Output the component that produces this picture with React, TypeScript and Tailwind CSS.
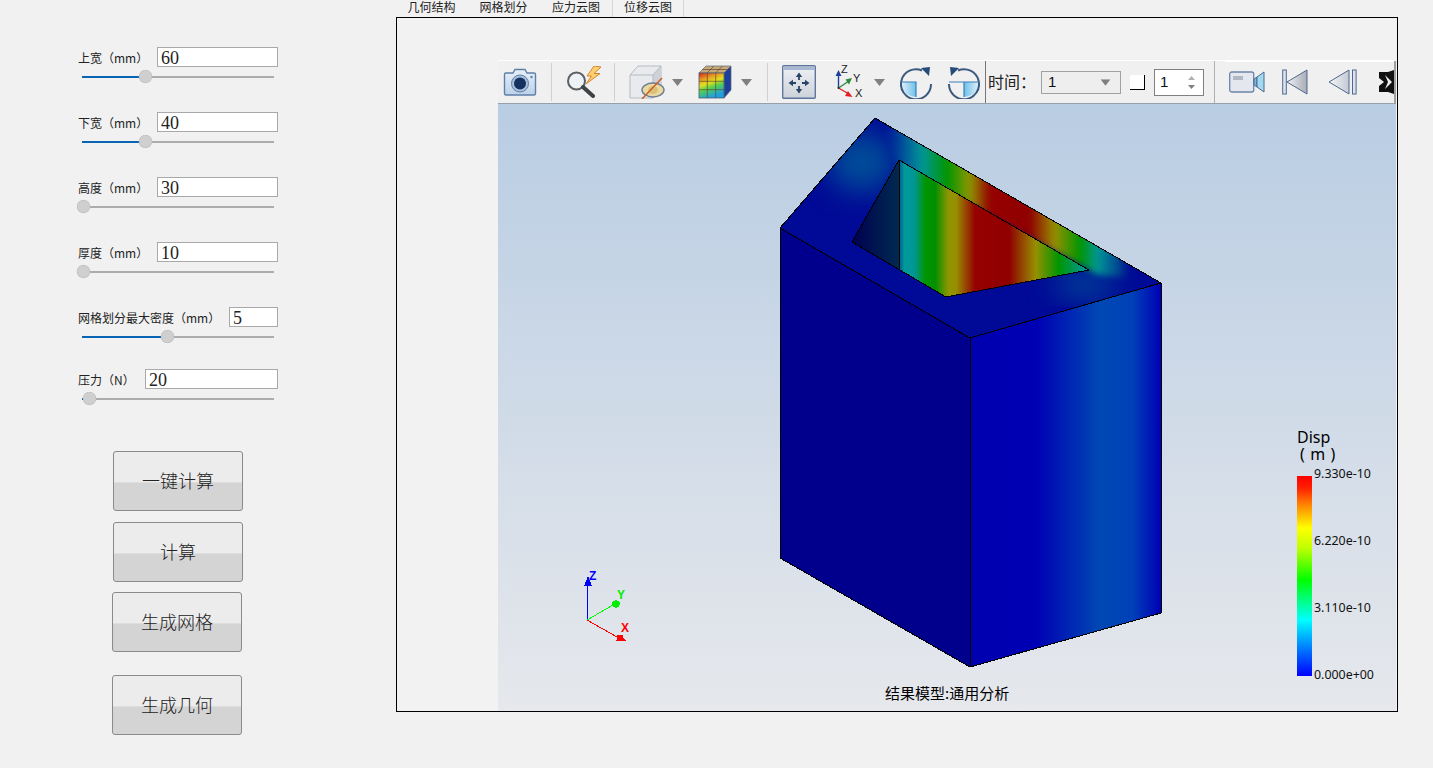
import { useState } from 'react';

const params = [
  { label: '上宽（mm）', value: '60', inputClass: 'w-[121px]', fill: 'w-[63px]', last: 'mb-[26px]' },
  { label: '下宽（mm）', value: '40', inputClass: 'w-[121px]', fill: 'w-[63px]', last: 'mb-[26px]' },
  { label: '高度（mm）', value: '30', inputClass: 'w-[121px]', fill: 'w-[1px]', last: 'mb-[26px]' },
  { label: '厚度（mm）', value: '10', inputClass: 'w-[121px]', fill: 'w-[1px]', last: 'mb-[26px]' },
  { label: '网格划分最大密度（mm）', value: '5', inputClass: 'w-[49px]', fill: 'w-[85px]', last: 'mb-[23px]' },
  { label: '压力（N）', value: '20', inputClass: 'w-[133px]', fill: 'w-[7px]', last: 'mb-[43px]' },
];

const buttons = [
  { text: '一键计算', cls: 'ml-[35px] mb-[11px]' },
  { text: '计算', cls: 'ml-[35px] mb-[10px]' },
  { text: '生成网格', cls: 'ml-[34px] mb-[23px]' },
  { text: '生成几何', cls: 'ml-[34px]' },
];

const tabs = [
  { text: '几何结构', cls: 'w-[71px]' },
  { text: '网格划分', cls: 'w-[73px]' },
  { text: '应力云图', cls: 'w-[72px]' },
  { text: '位移云图', cls: 'w-[72px] border-x border-[#d8d8d8] bg-[#f2f2f2]' },
];

function ParamRow({ p }: { p: (typeof params)[number] }) {
  const [value, setValue] = useState(p.value);
  return (
    <div className={p.last}>
      <div className="flex h-[20px] items-center justify-between">
        <span className="pt-[1px] text-[12px] leading-none text-[#222]">{p.label}</span>
        <input
          value={value}
          onChange={(e) => setValue(e.target.value)}
          className={`${p.inputClass} h-[20px] border border-[#a9a9a9] bg-white pt-[2px] pl-[3px] font-['Liberation_Serif',serif] text-[18px] leading-none text-[#222] outline-none`}
        />
      </div>
      <div className="ml-[4px] flex h-[19px] w-[192px] items-center">
        <div className={`${p.fill} h-[2px] bg-[#0a64b4]`} />
        <div className="z-10 -mx-[5.5px] h-[11px] w-[11px] shrink-0 scale-[1.25] rounded-full border border-dotted border-[#bbb] bg-[#cfcfcf]" />
        <div className="h-[2px] flex-1 bg-[#acacac]" />
      </div>
    </div>
  );
}

function Caret({ className }: { className: string }) {
  return (
    <svg width="11" height="7" viewBox="0 0 11 7" className={className}>
      <path d="M0 0H11L5.5 7Z" fill="#808080" />
    </svg>
  );
}

function Sep({ className }: { className: string }) {
  return <div className={`${className} h-[38px] w-[1px] shrink-0 bg-[#d0d0d0]`} />;
}

function CameraIcon() {
  return (
    <svg width="34" height="30" viewBox="0 0 34 30" className="ml-[5px] shrink-0">
      <defs>
        <linearGradient id="camBody" x1="0" y1="0" x2="0" y2="1">
          <stop offset="0" stopColor="#e8f0f8" />
          <stop offset="1" stopColor="#bcd2e8" />
        </linearGradient>
      </defs>
      <path d="M1.5 7.5Q1.5 6 3 6H10L12 2.5H22L24 6H31Q32.5 6 32.5 7.5V26Q32.5 28 31 28H3Q1.5 28 1.5 26Z" fill="url(#camBody)" stroke="#5f7ea8" strokeWidth="1.4" />
      <circle cx="17" cy="16.5" r="8.5" fill="#a9c0dc" stroke="#5f7ea8" />
      <circle cx="17" cy="16.5" r="6" fill="#16305f" />
      <circle cx="28.5" cy="10" r="1.2" fill="#5f7ea8" />
    </svg>
  );
}

function MagnifierIcon() {
  return (
    <svg width="36" height="32" viewBox="0 0 36 32" className="ml-[14px] shrink-0">
      <circle cx="10.5" cy="15" r="8.5" fill="#edf2f6" stroke="#5a5f62" strokeWidth="2" />
      <path d="M17 21L27 30" stroke="#3f4346" strokeWidth="4" strokeLinecap="round" />
      <path d="M28 0L21 10H25.5L20 18L34 7.5H28L35 1Z" fill="#fbd070" stroke="#d9822b" strokeWidth="1" />
    </svg>
  );
}

function CubeIcon() {
  return (
    <svg width="36" height="34" viewBox="0 0 36 34" className="ml-[14px] shrink-0">
      <path d="M1 10L9 1H32V24L24 33H1Z" fill="#e8eaee" stroke="#b4bac4" />
      <path d="M24 10L32 1V24L24 33Z" fill="#ced2d8" />
      <path d="M1 10H24V33M24 10L32 1" fill="none" stroke="#b4bac4" />
      <ellipse cx="24" cy="25" rx="11" ry="7" fill="#ead9a0" stroke="#6f7e94" strokeWidth="1.4" />
      <ellipse cx="24" cy="25" rx="5" ry="4" fill="#dcc078" />
      <path d="M13 34L33 13" stroke="#c9602b" strokeWidth="1.5" />
    </svg>
  );
}

function RubikIcon() {
  return (
    <svg width="34" height="34" viewBox="0 0 34 34" className="ml-[15px] shrink-0">
      <defs>
        <linearGradient id="rubikFace" x1="0" y1="0" x2="0.35" y2="1">
          <stop offset="0" stopColor="#d82020" />
          <stop offset="0.28" stopColor="#e8a020" />
          <stop offset="0.48" stopColor="#e0e020" />
          <stop offset="0.68" stopColor="#50d050" />
          <stop offset="1" stopColor="#20a0e0" />
        </linearGradient>
      </defs>
      <path d="M1 8L8 1H33L26 8Z" fill="#c8a878" stroke="#5c6a7c" strokeWidth="0.7" />
      <path d="M26 8L33 1V25L26 33Z" fill="#1c3f9a" stroke="#5c6a7c" strokeWidth="0.7" />
      <rect x="1" y="8" width="25" height="25" fill="url(#rubikFace)" stroke="#4a5a70" strokeWidth="0.8" />
      <path d="M9.3 8V33M17.7 8V33M1 16.3H26M1 24.7H26M9 8L16 1M17.5 8L24.5 1M4.5 4.5H29.5" stroke="#5c4a30" strokeWidth="0.7" fill="none" />
    </svg>
  );
}

function PanIcon() {
  return (
    <svg width="34" height="34" viewBox="0 0 34 34" className="ml-[14px] shrink-0">
      <defs>
        <linearGradient id="panBody" x1="0" y1="0" x2="0" y2="1">
          <stop offset="0" stopColor="#eef1f5" />
          <stop offset="1" stopColor="#cdd2da" />
        </linearGradient>
      </defs>
      <rect x="0.7" y="0.7" width="32.6" height="32.6" rx="1" fill="url(#panBody)" stroke="#5f769c" strokeWidth="1.4" />
      <rect x="1.5" y="1.5" width="31" height="3.5" fill="#a8b8d0" />
      <path d="M17 7.5L13.8 12H20.2ZM17 28.5L13.8 24H20.2ZM6.5 18L11 14.8V21.2ZM27.5 18L23 14.8V21.2Z" fill="#2a4468" />
      <path d="M17 11V15M17 21V25M10 18H14M20 18H24" stroke="#2a4468" strokeWidth="1.8" />
    </svg>
  );
}

function AxisIcon() {
  return (
    <svg width="30" height="36" viewBox="0 0 30 36" className="ml-[18px] shrink-0">
      <path d="M4.5 24V10" stroke="#1c3f9a" strokeWidth="1.4" />
      <path d="M4.5 6L1.5 12H7.5Z" fill="#1c3f9a" />
      <path d="M4.5 24L15 17" stroke="#2a8a3a" strokeWidth="1.4" />
      <path d="M18 14L11.5 15.5L15 20.5Z" fill="#2a8a3a" />
      <path d="M4.5 24L15 30" stroke="#e02020" strokeWidth="1.4" />
      <path d="M18.5 33L11 32L14 27Z" fill="#e02020" />
      <circle cx="4.5" cy="24" r="1" fill="#222" />
      <g fontSize="11" fontFamily="Liberation Sans" fill="#222">
        <text x="7" y="9">Z</text>
        <text x="19" y="18">Y</text>
        <text x="21" y="33">X</text>
      </g>
    </svg>
  );
}

function RotateIcon({ flip, className }: { flip?: boolean; className: string }) {
  const id = flip ? 'rotA' : 'rotB';
  return (
    <svg width="32" height="34" viewBox="0 0 32 34" className={`${className} shrink-0 ${flip ? '-scale-x-100' : ''}`}>
      <defs>
        <linearGradient id={id} x1="0" y1="0" x2="1" y2="0">
          <stop offset="0" stopColor="#e4f2fc" />
          <stop offset="1" stopColor="#6cc0ea" />
        </linearGradient>
      </defs>
      <path d="M1 17A15 15 0 0 0 16 32V17Z" fill={`url(#${id})`} />
      <path d="M22 5.5A15 15 0 1 0 31 19" fill="none" stroke="#3b5a80" strokeWidth="2" />
      <path d={flip ? 'M1 17H31M16 17V32' : 'M1 17H16V32'} fill="none" stroke="#3b7fb8" strokeWidth="1.2" />
      <path d="M21 3L30 2L29 11Z" fill="#274a78" />
    </svg>
  );
}

function VideoIcon() {
  return (
    <svg width="36" height="22" viewBox="0 0 36 22" className="ml-[4px] shrink-0">
      <rect x="0.7" y="1" width="24" height="20" rx="2" fill="#e4e8ee" stroke="#6c84a8" strokeWidth="1.3" />
      <rect x="4" y="5" width="10" height="4" fill="#b0b8c4" />
      <path d="M25 8L28 6V16L25 14Z" fill="#7fb8e0" stroke="#4a6a90" />
      <path d="M28 6L35 1V21L28 16Z" fill="#a4d8f0" stroke="#4a6a90" />
    </svg>
  );
}

function FirstIcon() {
  return (
    <svg width="26" height="26" viewBox="0 0 26 26" className="ml-[17px] shrink-0">
      <defs>
        <linearGradient id="firstG" x1="0" y1="0" x2="1" y2="0">
          <stop offset="0" stopColor="#eef0f4" />
          <stop offset="1" stopColor="#a8acb4" />
        </linearGradient>
      </defs>
      <rect x="0.7" y="1" width="3.6" height="24" fill="#dde3ec" stroke="#4f6890" />
      <path d="M5 13L25 1V25Z" fill="url(#firstG)" stroke="#4f6890" />
    </svg>
  );
}

function PrevIcon() {
  return (
    <svg width="29" height="26" viewBox="0 0 29 26" className="ml-[20px] shrink-0">
      <defs>
        <linearGradient id="prevG" x1="0" y1="0" x2="1" y2="0">
          <stop offset="0" stopColor="#f4f6f8" />
          <stop offset="1" stopColor="#c4cad4" />
        </linearGradient>
      </defs>
      <path d="M1 13L21 1V25Z" fill="url(#prevG)" stroke="#4f6890" strokeWidth="1" />
      <rect x="24.5" y="1" width="3.6" height="24" fill="#dde3ec" stroke="#4f6890" />
    </svg>
  );
}

function ClippedIcon() {
  return (
    <svg width="15" height="24" viewBox="0 0 15 24" className="ml-[22px] shrink-0">
      <path d="M0 2H9L15 0V24L9 22H0V16L5 12L0 8Z" fill="#111" />
      <path d="M6 5L13 12L6 19L9 12Z" fill="#eee" />
    </svg>
  );
}

function Toolbar() {
  return (
    <div className="flex h-[44px] shrink-0 items-center border-t border-b border-t-white border-b-[#9aa0a8] bg-[#f0f0f0]">
      <CameraIcon />
      <Sep className="ml-[14px]" />
      <MagnifierIcon />
      <Sep className="ml-[12px]" />
      <CubeIcon />
      <Caret className="ml-[7px] shrink-0" />
      <RubikIcon />
      <Caret className="ml-[9px] shrink-0" />
      <Sep className="ml-[15px]" />
      <PanIcon />
      <AxisIcon />
      <Caret className="ml-[10px] shrink-0" />
      <RotateIcon className="ml-[15px]" />
      <RotateIcon flip className="ml-[16px]" />
      <div className="ml-[5px] h-full w-[1px] shrink-0 bg-[#777]" />
      <span className="ml-[2px] w-[53px] shrink-0 pb-[3px] text-[16px] leading-none text-[#222]">时间：</span>
      <div className="flex h-[23px] w-[80px] shrink-0 items-center justify-between border border-[#a0a0a0] bg-[#eeeeee] px-[6px] font-['Liberation_Sans',sans-serif] text-[15px] text-[#111]">
        1
        <Caret className="mr-[3px] shrink-0 scale-90" />
      </div>
      <div className="ml-[9px] h-[15px] w-[15px] shrink-0 border-r border-b border-r-black border-b-black bg-white" />
      <div className="ml-[9px] flex h-[27px] w-[50px] shrink-0 items-center justify-between border border-[#808080] bg-white pr-[8px] pl-[5px] font-['Liberation_Sans',sans-serif] text-[15px] text-[#111]">
        1
        <span className="flex flex-col gap-[5px]">
          <svg width="7" height="4" viewBox="0 0 7 4"><path d="M0 4H7L3.5 0Z" fill="#b0b0b0" /></svg>
          <svg width="7" height="4" viewBox="0 0 7 4"><path d="M0 0H7L3.5 4Z" fill="#808080" /></svg>
        </span>
      </div>
      <div className="ml-[10px] h-full w-[1px] shrink-0 bg-[#b0b0b0]" />
      <div className="ml-[10px] flex h-full flex-1 items-center overflow-hidden border-r-2 border-r-[#a0a0a0] shadow-[inset_0_1px_0_#fff]">
        <VideoIcon />
        <FirstIcon />
        <PrevIcon />
        <ClippedIcon />
      </div>
    </div>
  );
}

function Model() {
  return (
    <svg viewBox="498 104 898 607" className="absolute inset-0 h-full w-full" shapeRendering="crispEdges">
      <defs>
        <linearGradient id="wallStripes" gradientUnits="userSpaceOnUse" x1="899" y1="0" x2="1089" y2="0">
          <stop offset="0" stopColor="#005a8c" />
          <stop offset="0.03" stopColor="#009b9b" />
          <stop offset="0.08" stopColor="#009696" />
          <stop offset="0.14" stopColor="#009600" />
          <stop offset="0.19" stopColor="#008f00" />
          <stop offset="0.26" stopColor="#8f9600" />
          <stop offset="0.3" stopColor="#969000" />
          <stop offset="0.4" stopColor="#960000" />
          <stop offset="0.58" stopColor="#8f0000" />
          <stop offset="0.72" stopColor="#969000" />
          <stop offset="0.84" stopColor="#009600" />
          <stop offset="0.98" stopColor="#009696" />
        </linearGradient>
        <linearGradient id="topStripes" gradientUnits="userSpaceOnUse" x1="885" y1="0" x2="1135" y2="0">
          <stop offset="0" stopColor="#004a9a" stopOpacity="0" />
          <stop offset="0.08" stopColor="#005a9a" />
          <stop offset="0.15" stopColor="#009696" />
          <stop offset="0.25" stopColor="#009600" />
          <stop offset="0.34" stopColor="#8f9600" />
          <stop offset="0.42" stopColor="#960000" />
          <stop offset="0.58" stopColor="#8f0000" />
          <stop offset="0.68" stopColor="#969000" />
          <stop offset="0.78" stopColor="#009600" />
          <stop offset="0.85" stopColor="#009696" />
          <stop offset="0.94" stopColor="#004090" />
          <stop offset="1" stopColor="#00009a" stopOpacity="0" />
        </linearGradient>
        <linearGradient id="sideRight" gradientUnits="userSpaceOnUse" x1="970" y1="0" x2="1161" y2="0">
          <stop offset="0" stopColor="#0000b0" />
          <stop offset="0.35" stopColor="#0000b4" />
          <stop offset="0.68" stopColor="#0048b4" />
          <stop offset="0.85" stopColor="#0040b8" />
          <stop offset="1" stopColor="#0000b4" />
        </linearGradient>
        <linearGradient id="wallDark" gradientUnits="userSpaceOnUse" x1="852" y1="0" x2="899" y2="0">
          <stop offset="0" stopColor="#000050" />
          <stop offset="1" stopColor="#002a50" />
        </linearGradient>
        <filter id="soft" x="-40%" y="-40%" width="180%" height="180%" colorInterpolationFilters="sRGB">
          <feGaussianBlur stdDeviation="14" />
        </filter>
        <filter id="softEdge" x="-5%" y="-5%" width="110%" height="110%" colorInterpolationFilters="sRGB">
          <feGaussianBlur stdDeviation="3" />
        </filter>
        <clipPath id="topClip">
          <path d="M875 118L780 228L970 338L1161 283Z" />
        </clipPath>
      </defs>

      {/* part faces */}
      <path d="M780 228L970 338V667L780 558Z" fill="#00008c" />
      <path d="M970 338L1161 283V613L970 667Z" fill="url(#sideRight)" />
      <path d="M875 118L780 228L970 338L1161 283Z" fill="#000a96" />
      <g clipPath="url(#topClip)">
        <ellipse cx="862" cy="162" rx="34" ry="30" fill="#004c98" filter="url(#soft)" />
        <ellipse cx="1085" cy="285" rx="32" ry="12" fill="#004c98" filter="url(#soft)" />
        <path d="M875 105L1185 283L1098 275L899 168Z" fill="url(#topStripes)" filter="url(#softEdge)" />
      </g>

      {/* pocket */}
      <path d="M899 160L852 242L899 270Z" fill="url(#wallDark)" />
      <path d="M899 160L1089 270L946 297L899 270Z" fill="url(#wallStripes)" />
      <g fill="none" stroke="#000" strokeWidth="1">
        <path d="M899 160L852 242L946 297L1089 270Z" />
        <path d="M899 160V270" />
        <path d="M875 118L780 228V558L970 667L1161 613V283Z" />
        <path d="M875 118L1161 283M780 228L970 338L1161 283M970 338V667" />
      </g>

      {/* axis triad */}
      <g strokeWidth="1" fill="none">
        <path d="M587 620V584" stroke="#0000ff" />
        <path d="M587 620L613 605" stroke="#00ff00" />
        <path d="M587 620L617 637" stroke="#ff0000" />
      </g>
      <path d="M584 586L588 576L592 586Z" fill="#0000ff" />
      <path d="M612 602H620L616 608Z" fill="#00ee00" />
      <circle cx="616" cy="604" r="3.6" fill="#00ee00" />
      <path d="M616 641L620 634L626 641Z" fill="#ff0000" />
      <circle cx="620" cy="638" r="3.4" fill="#ff0000" />
      <g fontFamily="Liberation Sans" fontSize="12" fontWeight="700">
        <text x="589" y="580" fill="#0000ff">Z</text>
        <text x="617" y="599" fill="#00ee00">Y</text>
        <text x="621" y="632" fill="#ff0000">X</text>
      </g>
    </svg>
  );
}

function Legend() {
  return (
    <div className="absolute top-[325px] left-[799px] font-['Noto_Sans',sans-serif] text-black">
      <div className="text-[16px] leading-[17px]">Disp</div>
      <div className="mb-[13px] pl-[3px] text-[16px] leading-[17px] tracking-[0.6px] whitespace-pre">( m )</div>
      <div className="flex">
        <div className="h-[200px] w-[15px] bg-[linear-gradient(to_bottom,#ff0000_0%,#ff2000_6%,#ff8000_14%,#ffff00_26%,#c0ff00_36%,#00ff00_52%,#00ff80_62%,#00ffff_72%,#0090ff_84%,#0000ff_100%)]" />
        <div className="relative -top-[10px] ml-[2px] flex h-[217px] flex-col justify-between text-[12.4px] leading-[16px] text-[#111]">
          <span>9.330e-10</span>
          <span>6.220e-10</span>
          <span>3.110e-10</span>
          <span>0.000e+00</span>
        </div>
      </div>
    </div>
  );
}

export default function App() {
  return (
    <div className="flex h-[768px] w-[1433px] overflow-hidden bg-[#f1f1f1] font-['Noto_Sans_CJK_SC',sans-serif]">
      <aside className="w-[396px] shrink-0 pt-[47px] pr-[118px] pl-[78px]">
        {params.map((p) => (
          <ParamRow key={p.label} p={p} />
        ))}
        {buttons.map((b) => (
          <button
            key={b.text}
            className={`${b.cls} block h-[60px] w-[130px] rounded-[3px] border border-[#8a8a8a] bg-[linear-gradient(to_bottom,#ececec_0%,#ececec_52%,#d4d4d4_53%,#d4d4d4_100%)] pb-[2px] text-[18px] font-light text-[#222]`}
          >
            {b.text}
          </button>
        ))}
      </aside>

      <main className="w-[1002px] shrink-0">
        <div className="flex h-[17px] overflow-hidden">
          {tabs.map((t) => (
            <div key={t.text} className={`${t.cls} text-center text-[12px] leading-[14px] text-[#222]`}>
              {t.text}
            </div>
          ))}
        </div>
        <div className="h-[695px] border border-black bg-[#f2f2f2] pt-[42px] pl-[101px]">
          <div className="flex h-[651px] w-[898px] flex-col">
            <Toolbar />
            <div className="relative flex-1 overflow-hidden bg-[linear-gradient(to_bottom,#b9cde3,#e6e8ec)]">
              <Model />
              <Legend />
              <div className="absolute bottom-[11px] left-[387px] text-[15px] leading-none text-black">结果模型:通用分析</div>
            </div>
          </div>
        </div>
      </main>
    </div>
  );
}
